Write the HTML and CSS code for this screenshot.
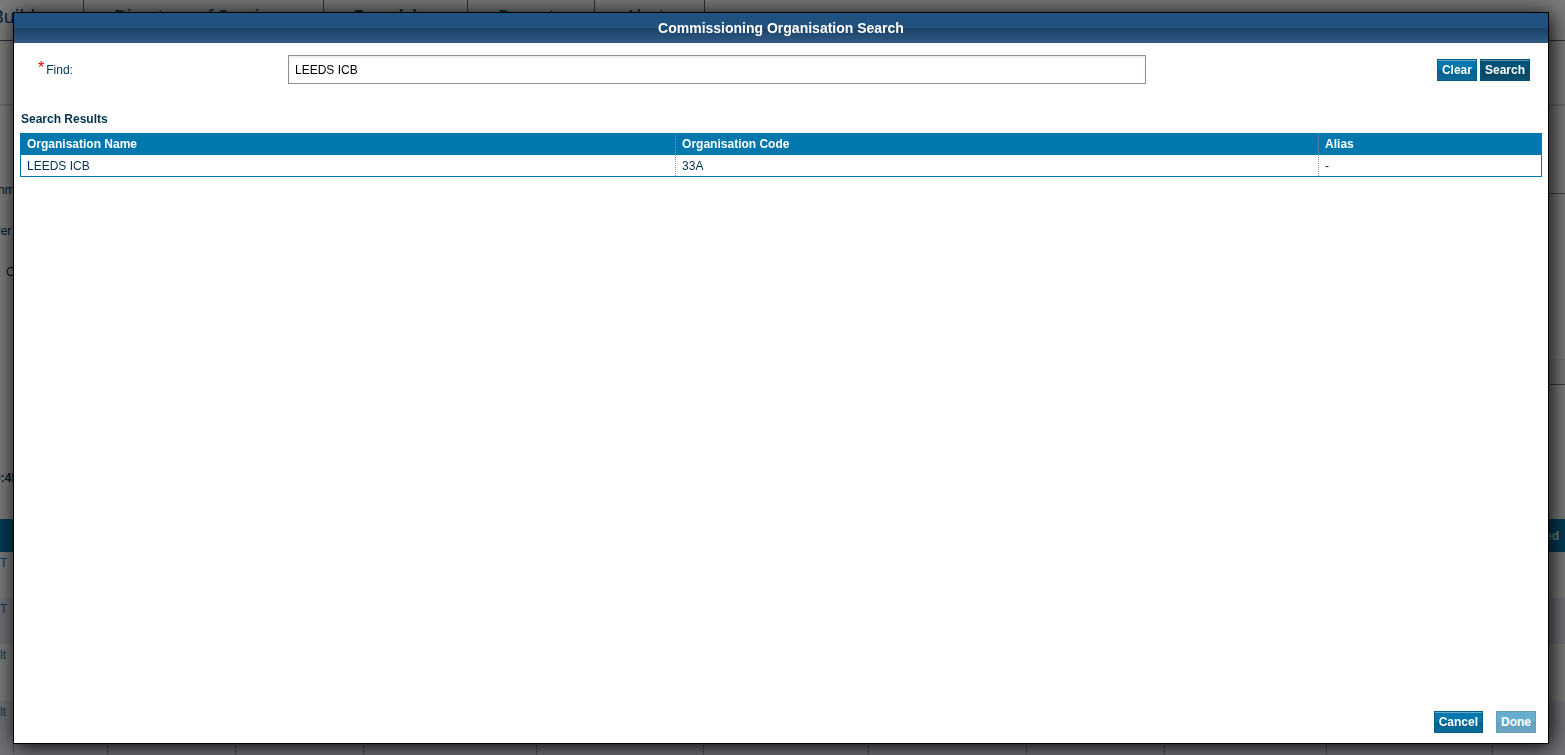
FILE: index.html
```
<!DOCTYPE html>
<html lang="en">
<head>
    <meta charset="UTF-8">
    <meta name="viewport" content="width=device-width, initial-scale=1.0">
    <title>Commissioning Organisation Search</title>
    <link rel="stylesheet" href="styles.css">
</head>
<body>
    <div class="page">
        <nav class="tabs">
            <a href="#" class="tab">Builder</a>
            <a href="#" class="tab wide">Directory of Services</a>
            <a href="#" class="tab active">Enquiries</a>
            <a href="#" class="tab">Reports</a>
            <a href="#" class="tab">Alerts</a>
        </nav>
        <div class="subnav"></div>
        <div class="criteria">
            <div class="side">
                <span class="side-item">nm</span>
                <span class="side-item">ler</span>
                <span class="side-item indent">C</span>
            </div>
            <div class="panels">
                <div class="panel-top"></div>
                <div class="panel-mid"></div>
                <div class="panel-foot"></div>
            </div>
        </div>
        <div class="updated">0:45</div>
        <table class="worklist">
            <colgroup>
                <col class="w-edge"><col class="w-94"><col class="w-128"><col class="w-128"><col class="w-173"><col class="w-167"><col class="w-165"><col class="w-158"><col class="w-138"><col class="w-162"><col class="w-166"><col>
            </colgroup>
            <thead>
                <tr><th></th><th></th><th></th><th></th><th></th><th></th><th></th><th></th><th></th><th></th><th></th><th class="last">ed</th></tr>
            </thead>
            <tbody>
                <tr><td><a href="#">T</a></td><td></td><td></td><td></td><td></td><td></td><td></td><td></td><td></td><td></td><td></td><td></td></tr>
                <tr class="odd"><td><a href="#">T</a></td><td></td><td></td><td></td><td></td><td></td><td></td><td></td><td></td><td></td><td></td><td></td></tr>
                <tr class="tall"><td><a href="#">lt</a></td><td></td><td></td><td></td><td></td><td></td><td></td><td></td><td></td><td></td><td></td><td></td></tr>
                <tr class="odd tall"><td><a href="#">lt</a></td><td></td><td></td><td></td><td></td><td></td><td></td><td></td><td></td><td></td><td></td><td></td></tr>
            </tbody>
        </table>
    </div>

    <div class="overlay">
        <div class="dialog" role="dialog" aria-labelledby="dialogTitle">
            <h1 class="dialog-title" id="dialogTitle">Commissioning Organisation Search</h1>
            <form class="search-form">
                <label for="find"><span class="required">*</span>Find:</label>
                <input type="text" id="find" value="LEEDS ICB">
                <div class="form-actions">
                    <button type="button" class="btn">Clear</button>
                    <button type="button" class="btn primary">Search</button>
                </div>
            </form>
            <div class="results">
                <h2>Search Results</h2>
                <table class="results-table">
                    <thead>
                        <tr>
                            <th class="col-name">Organisation Name</th>
                            <th class="col-code">Organisation Code</th>
                            <th>Alias</th>
                        </tr>
                    </thead>
                    <tbody>
                        <tr>
                            <td>LEEDS ICB</td>
                            <td>33A</td>
                            <td>-</td>
                        </tr>
                    </tbody>
                </table>
            </div>
            <div class="dialog-footer">
                <button type="button" class="btn">Cancel</button>
                <button type="button" class="btn" disabled>Done</button>
            </div>
        </div>
    </div>
</body>
</html>
```

FILE: styles.css
```
* {
    box-sizing: border-box;
}
body {
    margin: 0;
    font-family: "Liberation Sans", Arial, sans-serif;
    font-size: 12px;
    color: #003350;
    background: #f6f6f6;
}

/* page behind the dialog */
.page {
    height: 100vh;
    overflow: hidden;
}
.tabs {
    display: flex;
    height: 41px;
    margin-left: -38px;
    background: #f3f7f5;
    border-bottom: 1px solid #5a6370;
}
.tab {
    padding: 3px 30px 0;
    border-right: 1px solid #5a6370;
    font-family: "Noto Sans", sans-serif;
    font-size: 18px;
    line-height: 27px;
    color: #00467a;
    text-decoration: none;
}
.tab.wide {
    padding-right: 36px;
}
.tab.active {
    font-weight: bold;
}
.subnav {
    height: 65px;
    border-bottom: 2px solid #d4d4d4;
}
.criteria {
    display: flex;
    height: 358px;
}
.side {
    display: flex;
    flex-direction: column;
    gap: 27px;
    width: 200px;
    padding-top: 77px;
}
.side-item {
    line-height: 14px;
    margin-left: -2px;
}
.side-item.indent {
    margin-left: 6px;
}
.panels {
    flex: 1;
}
.panel-top {
    height: 88px;
    border-bottom: 1px solid #7d8288;
}
.panel-mid {
    height: 165px;
}
.panel-foot {
    height: 26px;
    background: #ececec;
    border-bottom: 1px solid #7d7d7d;
}
.updated {
    height: 55px;
    margin-left: -6px;
    padding-top: 7px;
    font-weight: bold;
}
.worklist {
    width: 100%;
    table-layout: fixed;
    border-collapse: collapse;
}
.w-edge { width: 13px; }
.w-94 { width: 94px; }
.w-128 { width: 128px; }
.w-138 { width: 138px; }
.w-158 { width: 158px; }
.w-162 { width: 162px; }
.w-165 { width: 165px; }
.w-166 { width: 166px; }
.w-167 { width: 167px; }
.w-173 { width: 173px; }
.worklist th {
    height: 33px;
    padding: 0 6px;
    background: #0078ae;
    color: #fff;
    text-align: right;
}
.worklist td {
    height: 46px;
    padding: 4px 0;
    vertical-align: top;
    border-right: 1px dotted #555;
}
.worklist td:last-child {
    border-right: none;
}
.worklist .tall td {
    height: 57px;
}
.worklist .odd td {
    background: #e3e1ee;
}
.worklist a {
    color: #0078ae;
    text-decoration: none;
}

/* dialog */
.overlay {
    position: fixed;
    inset: 0;
    display: flex;
    padding: 12px 16px 11px 13px;
    background: rgba(0, 0, 0, 0.5);
}
.dialog {
    flex: 1;
    display: flex;
    flex-direction: column;
    background: #fff;
    border: 1px solid #000;
    box-shadow: 2px 2px 20px #000;
}
.dialog-title {
    margin: 0;
    font-size: 14px;
    line-height: 30px;
    text-align: center;
    color: #fff;
    background: linear-gradient(#20517f 50%, #1b4368 50%, #305a84);
}
.search-form {
    display: flex;
    align-items: center;
    padding: 12px 18px 0 24px;
}
.search-form label {
    width: 250px;
}
.required {
    font-size: 16px;
    line-height: 12px;
    color: #d80000;
    vertical-align: 1px;
    margin-right: 2px;
}
.search-form input {
    width: 56vw;
    max-width: 858px;
    height: 29px;
    padding: 0 6px;
    border: 1px solid #8e8e93;
    box-shadow: inset 0 2px 3px #eee;
    font: inherit;
    color: #000;
}
.form-actions {
    display: flex;
    gap: 3px;
    margin-left: auto;
}
.btn {
    height: 22px;
    padding: 0 4px;
    border: 1px solid #005d87;
    box-shadow: inset 0 1px #62a9cb;
    background: linear-gradient(#0078ae 50%, #00628f 50%, #0c6b96);
    font-family: inherit;
    font-size: 12px;
    font-weight: bold;
    color: #fff;
    cursor: pointer;
}
.btn.primary {
    border-color: #00527a;
    box-shadow: inset 0 1px #6290a7;
    background: linear-gradient(#005279 50%, #004261 50%, #0c4f6e);
}
.btn:disabled {
    opacity: 0.6;
    box-shadow: none;
    cursor: default;
}
.results {
    flex: 1;
    padding: 28px 6px 0;
}
.results h2 {
    margin: 0 0 7px 1px;
    font-size: 12px;
    line-height: 14px;
}
.results-table {
    width: 100%;
    table-layout: fixed;
    border-collapse: separate;
    border-spacing: 0;
    border: 1px solid #0078ae;
}
.results-table th,
.results-table td {
    height: 21px;
    padding: 0 6px;
    text-align: left;
    border-right: 1px dotted #8e8e93;
}
.results-table th:last-child,
.results-table td:last-child {
    border-right: none;
}
.results-table th {
    padding-bottom: 2px;
    color: #fff;
    background: #0078ae;
}
.col-name {
    width: 43.1%;
}
.col-code {
    width: 42.3%;
}
.dialog-footer {
    display: flex;
    justify-content: flex-end;
    gap: 13px;
    padding: 0 12px 10px;
}
```
